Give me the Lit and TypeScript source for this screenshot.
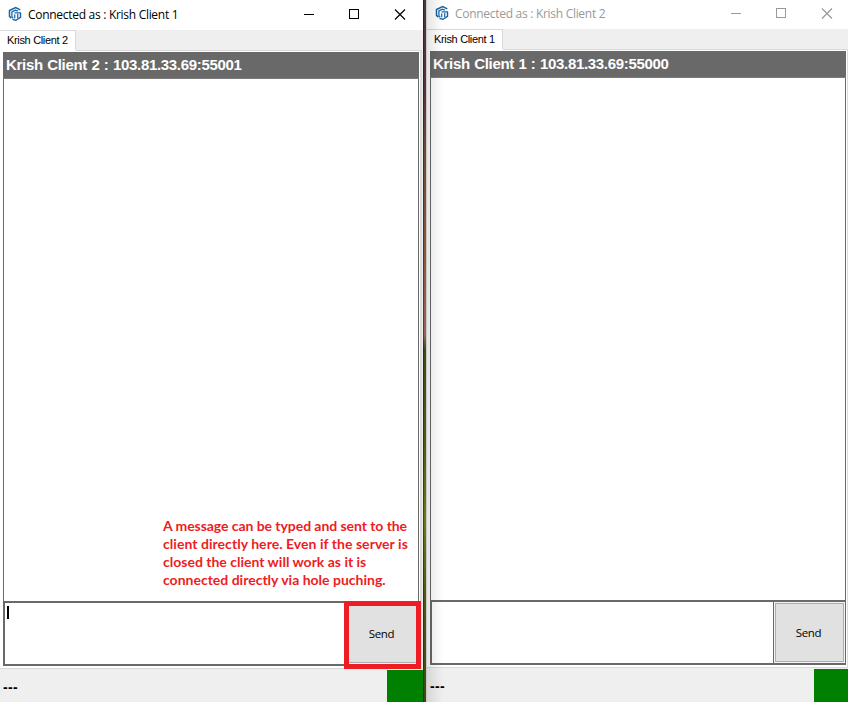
import { LitElement, html, css, svg } from "lit";
import { customElement, property } from "lit/decorators.js";

const logo = svg`
  <g fill="none" stroke="#1464a8">
    <path d="M13.2 3.6 L8.2 1.2 L1.6 4.2 V10.6 L3.6 12.4" stroke-width="1.6"/>
    <path d="M10.6 4.9 L7.8 3.9 L4.2 5.8 V11.2 L5.6 12.2" stroke-width="1.3"/>
    <path d="M7 6.8 H14" stroke-width="1.3"/>
    <path d="M13.4 7 V11.6 L8.4 14.8 L4.8 13.6" stroke-width="1.5"/>
    <path d="M7.2 8.6 V12.6 M10.4 8 V12.4" stroke-width="1.3"/>
  </g>`;

@customElement("chat-window")
export class ChatWindow extends LitElement {
  @property() name = "";
  @property() peer = "";
  @property() address = "";
  @property({ type: Boolean, reflect: true }) inactive = false;
  @property({ type: Boolean, reflect: true }) marked = false;

  static styles = css`
    :host { display: flex; flex-direction: column; flex: none; width: 423px; height: 702px;
      background: #efefef; color: #000; font: 11px "Liberation Sans", sans-serif; --title: #000; position: relative; }
    :host([inactive]) { --title: #999; }
    .title { height: 30px; flex: none; background: #fff; display: flex; box-sizing: border-box; padding-left: 8px; color: var(--title); }
    :host([inactive]) .title { height: 29px; }
    :host([inactive]) .title > * { margin-top: -1px; }
    .logo { width: 14px; height: 16px; padding-top: 6px; flex: none; }
    .caption { font: 12px/30px "Open Sans", "Noto Sans", sans-serif; margin-left: 6px; white-space: pre; letter-spacing: -0.29px; flex: 1; }
    .controls { width: 137px; height: 30px; flex: none; stroke: var(--title); fill: none; }
    .tabs { height: 20px; flex: none; display: flex; }
    .tab { width: 76px; height: 20px; box-sizing: border-box; background: #fff; border-right: 1px solid #d9d9d9;
      border-top: 1px solid #d9d9d9; line-height: 19px; padding-left: 7px; white-space: pre; letter-spacing: -0.33px; }
    .rule { height: 1px; flex: 1; align-self: flex-end; background: #d9d9d9; margin-bottom: -1px; margin-right: 1px; z-index: 1; }
    .page { height: 619px; flex: none; width: 422px; box-sizing: border-box; background: #fff; border-right: 2px solid #dcdcdc;
      border-bottom: 1px solid #d9d9d9; padding: 2px 1px 0 3px; }
    .head { height: 27px; box-sizing: border-box; border-bottom: 1px solid #7c7c7c; background: #696969; color: #fff;
      font: bold 15px/25px "Liberation Sans", sans-serif; padding-left: 3px; white-space: pre; letter-spacing: -0.32px; word-spacing: 0.6px; }
    .log { height: 522px; border: 1px solid #696969; border-top: 0; border-bottom: 0; position: relative; }
    .entry { display: flex; box-sizing: border-box; height: 65px; border: 2px solid #696969; border-right-width: 1px; }
    .input { flex: 1; border-right: 1px solid #696969; padding: 3px 0 0 2px; }
    .caret { width: 2px; height: 13px; background: #000; }
    .send { width: 71px; box-sizing: border-box; border: 1px solid #f4f4f4; background: #e1e1e1; outline: 1px solid #adadad; outline-offset: -2px;
      display: flex; align-items: center; justify-content: center; font: 11.5px "Open Sans", sans-serif; letter-spacing: -0.35px;
      padding-right: 2px; flex: none; }
    .status { flex: 1; display: flex; min-height: 0; }
    .dashes { flex: 1; font: bold 14px/36px "Liberation Sans", sans-serif; padding-left: 3px; letter-spacing: 0.4px; }
    .led { width: 36px; background: #008000; margin-top: 1px; }
    .frame { position: absolute; left: 344px; top: 601px; width: 77px; height: 68px; box-sizing: border-box; border: 5px solid #ee1c25; }
  `;

  render() {
    return html`
      <div class="title">
        <svg class="logo" viewBox="0 0 15 16">${logo}</svg>
        <div class="caption">Connected as : ${this.name}</div>
        <svg class="controls" viewBox="0 0 137 30">
          <path d="M18 14.5h10M63.5 9.5h9v9h-9z" shape-rendering="crispEdges"/>
          <path d="M109 9.5l10 10M119 9.5l-10 10" stroke-width="1.15"/>
        </svg>
      </div>
      <div class="tabs"><div class="tab">${this.peer}</div><div class="rule"></div></div>
      <div class="page">
        <div class="head">${this.peer} : ${this.address}</div>
        <div class="log"><slot></slot></div>
        <div class="entry">
          <div class="input">${this.marked ? html`<div class="caret"></div>` : ""}</div>
          <div class="send">Send</div>
        </div>
      </div>
      <div class="status"><div class="dashes">---</div><div class="led"></div></div>
      ${this.marked ? html`<div class="frame"></div>` : ""}
    `;
  }
}

const note = [
  { text: "A message can be typed and sent to the", spacing: -0.06 },
  { text: "client directly here. Even if the server is", spacing: 0.04 },
  { text: "closed the client will work as it is", spacing: 0 },
  { text: "connected directly via hole puching.", spacing: 0 },
];

@customElement("app-root")
export class AppRoot extends LitElement {
  static styles = css`
    :host { display: flex; width: 848px; height: 702px; overflow: hidden; position: relative; }
    .gap { width: 3px; flex: none; background: linear-gradient(#4a3540 0, #5a3038 90px, #6b4936 150px, #84583a 250px, #93645a 335px, #3a4a18 350px, #4a5a14 440px, #6b7a10 520px, #4c5610 600px, #3a4a14 702px);
      border-right: 1px solid #c8c8c8; box-shadow: inset 1px 0 rgba(20, 20, 20, .5); }
    .shade { position: absolute; left: 427px; top: 0; width: 16px; height: 702px; background: linear-gradient(90deg, rgba(0,0,0,.1), transparent); }
    .note { position: absolute; left: 159px; top: 438px; color: #ee1c25; font: bold 14px/18px Lato, sans-serif; white-space: pre; }
    .line { width: max-content; }
  `;

  render() {
    return html`
      <chat-window name="Krish Client 1" peer="Krish Client 2" address="103.81.33.69:55001" marked>
        <div class="note">${note.map((n) => html`<div class="line" style="letter-spacing:${n.spacing}px">${n.text}</div>`)}</div>
      </chat-window>
      <div class="gap"></div>
      <chat-window name="Krish Client 2" peer="Krish Client 1" address="103.81.33.69:55000" inactive></chat-window>
      <div class="shade"></div>
    `;
  }
}
